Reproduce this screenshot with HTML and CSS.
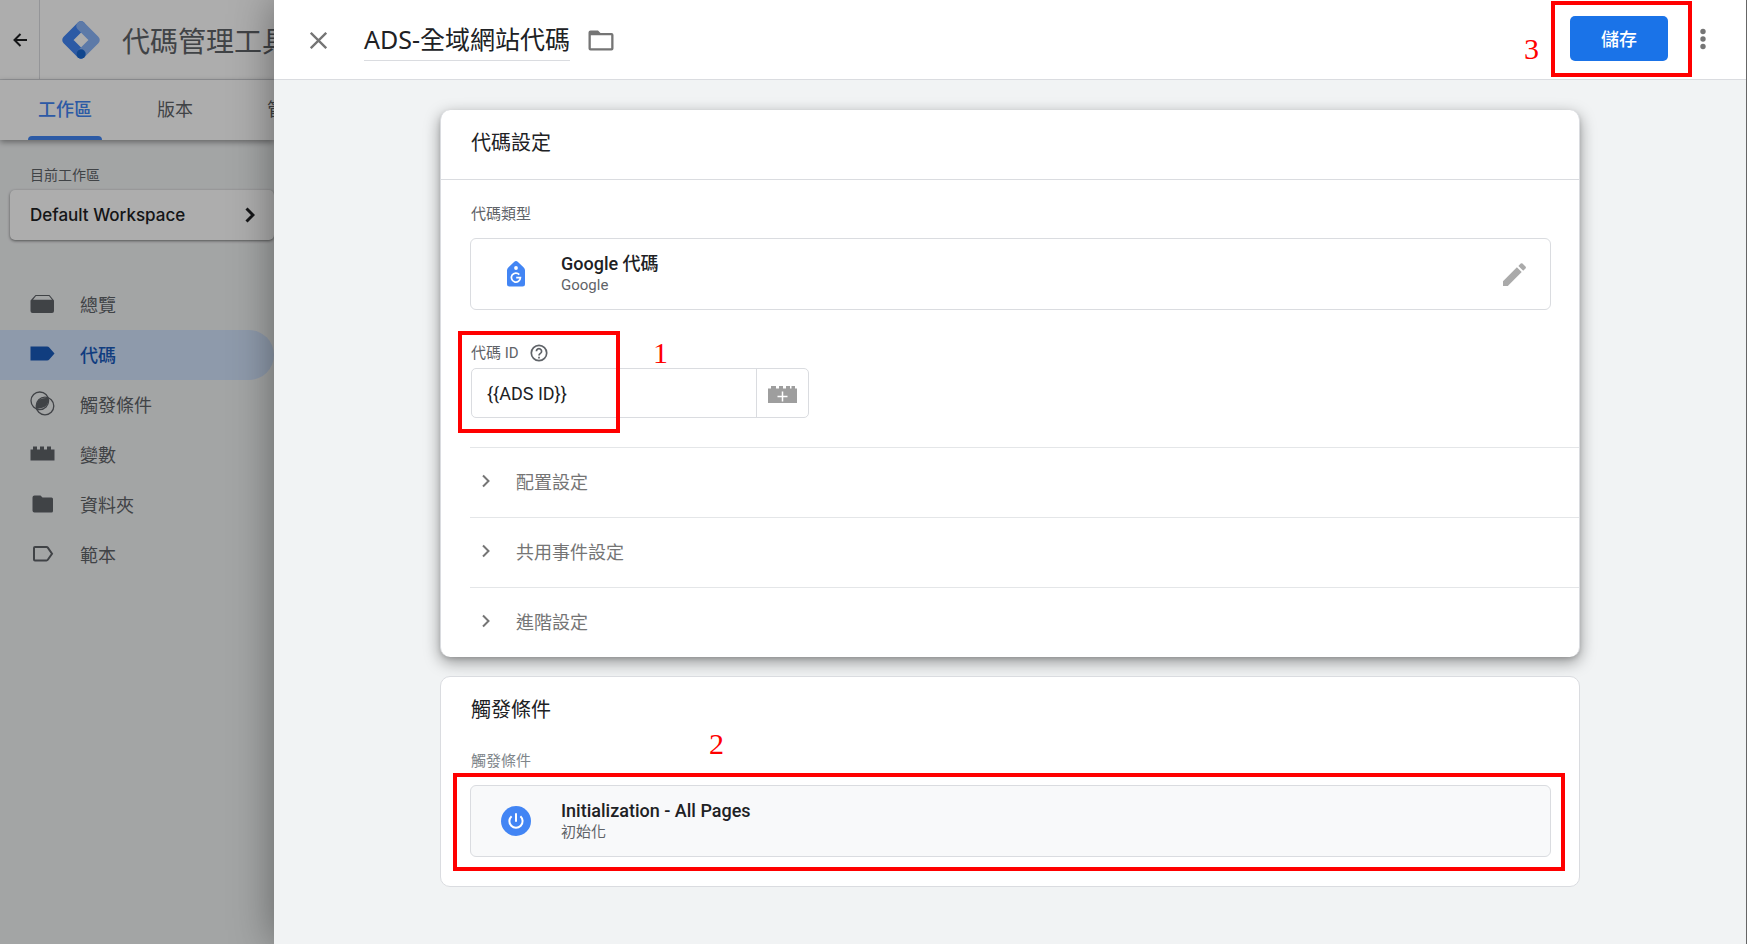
FILE: index.html
```html
<!DOCTYPE html>
<html lang="zh-Hant">
<head>
<meta charset="utf-8">
<title>代碼管理工具</title>
<link rel="stylesheet" href="styles.css">
</head>
<body>
<div class="app">
  <div class="backdrop">
    <header class="topbar">
      <button class="back" type="button" aria-label="返回">
        <svg width="14" height="14" viewBox="0 0 14 14" fill="none" stroke="currentColor" stroke-width="2"><path d="M14 7H2M7.500 1L1.500 7l6 6"/></svg>
      </button>
      <div class="brand">
        <svg width="38" height="38" viewBox="0 0 38 38" fill="none" stroke-width="9.500" stroke-linejoin="round" stroke-linecap="round">
          <path d="M19 5L5 19l14 14" stroke="#4285f4"/>
          <path d="M19 5l14 14-14 14" stroke="#8ab4f8"/>
          <circle cx="19" cy="33" r="4.700" fill="#1967d2"/>
        </svg>
        <span class="brand-name">代碼管理工具</span>
      </div>
    </header>
    <nav class="tabs">
      <a class="tab tab-active" href="#">工作區</a>
      <a class="tab" href="#">版本</a>
      <a class="tab" href="#">管理</a>
    </nav>
    <div class="sidebar">
      <div class="ws-label">目前工作區</div>
      <button class="workspace" type="button">
        <span>Default Workspace</span>
        <svg width="10" height="16" viewBox="0 0 10 16" fill="none" stroke="currentColor" stroke-width="3"><path d="M1.500 1.500L8 8l-6.500 6.500"/></svg>
      </button>
      <nav class="menu">
        <a class="item" href="#"><svg width="25" height="25" viewBox="0 0 25 25"><path d="M5.500 4h14L24 9.500V20a2 2 0 0 1-2 2H2.500a2 2 0 0 1-2-2V9.500zM6 5L3 8.800h19L19 5z" fill="currentColor" fill-rule="evenodd"/></svg>總覽</a>
        <a class="item item-active" href="#"><svg width="25" height="25" viewBox="0 0 25 25"><path d="M.5 5.500h16.500q1.500 0 2.500 1.200L24.500 12.500l-5 5.800q-1 1.200-2.500 1.200H.5z" fill="currentColor"/></svg>代碼</a>
        <a class="item" href="#"><svg width="25" height="25" viewBox="0 0 25 25"><g fill="none" stroke="currentColor" stroke-width="1.300"><circle cx="9.800" cy="9.800" r="8.800"/><circle cx="15" cy="15" r="8.800"/></g><path d="M18.300 7.100C19 12 17 18 6.500 17.700 5.500 11 9 6 18.300 7.100z" fill="currentColor"/></svg>觸發條件</a>
        <a class="item" href="#"><svg width="25" height="25" viewBox="0 0 25 25"><path d="M.5 8.500H3V5.500h4v3h3v-3h4v3h3v-3h4v3h3.500v11H.5z" fill="currentColor"/></svg>變數</a>
        <a class="item" href="#"><svg width="25" height="25" viewBox="0 0 25 25"><path d="M4.500 4.500h6L12.500 6.500h9a1.500 1.500 0 0 1 1.500 1.500v12a1.500 1.500 0 0 1-1.500 1.500h-17A2 2 0 0 1 2.500 19.500v-13a2 2 0 0 1 2-2z" fill="currentColor"/></svg>資料夾</a>
        <a class="item" href="#"><svg width="25" height="25" viewBox="0 0 25 25"><path d="M5 6h11.500q.8 0 1.300.7L22 12.800l-4.200 6q-.5.700-1.300.7H5a1 1 0 0 1-1-1V7a1 1 0 0 1 1-1z" fill="none" stroke="currentColor" stroke-width="2"/></svg>範本</a>
      </nav>
    </div>
  </div>

  <main class="panel">
    <header class="panel-head">
      <button class="icon-btn icon-low close" type="button" aria-label="關閉">
        <svg width="17" height="17" viewBox="0 0 17 17" fill="none" stroke="currentColor" stroke-width="2.300"><path d="M.8.800l15.400 15.400M16.200.800L.8 16.200"/></svg>
      </button>
      <h1 class="tag-name">ADS-全域網站代碼</h1>
      <button class="icon-btn icon-low" type="button" aria-label="資料夾">
        <svg width="26" height="21" viewBox="0 0 26 21"><path d="M2.500.5h7.500L12.500 3H23.500A2 2 0 0 1 25.500 5v13.500a2 2 0 0 1-2 2h-21a2 2 0 0 1-2-2v-16a2 2 0 0 1 2-2zM2.800 5.200v13h20.400v-13z" fill="currentColor" fill-rule="evenodd"/></svg>
      </button>
      <div class="save-wrap">
        <button class="save" type="button">儲存</button>
        <span class="mark mark-save"></span>
        <span class="num num-3">3</span>
      </div>
      <button class="icon-btn" type="button" aria-label="更多">
        <svg width="6" height="22" viewBox="0 0 6 22" fill="currentColor"><circle cx="3" cy="3.500" r="2.700"/><circle cx="3" cy="11" r="2.700"/><circle cx="3" cy="18.500" r="2.700"/></svg>
      </button>
    </header>

    <div class="content">
      <section class="card card-raised">
        <h2 class="card-title card-title-line">代碼設定</h2>
        <div class="card-body">
          <div class="label">代碼類型</div>
          <div class="entity">
            <svg class="entity-icon" width="30" height="30" viewBox="0 0 30 30">
              <path d="M15 2q1 0 1.700.8l5.800 5.400q1.500 1.300 1.500 3V25a2.500 2.500 0 0 1-2.500 2.500h-13A2.500 2.500 0 0 1 6 25V11.200q0-1.700 1.500-3l5.800-5.400Q14 2 15 2z" fill="#4285f4"/>
              <circle cx="15" cy="9" r="1.900" fill="#fff"/>
              <path d="M18.300 15.600A4.500 4.500 0 1 0 19.400 18.700H15.200" fill="none" stroke="#fff" stroke-width="1.700"/>
            </svg>
            <div class="entity-text">
              <div class="entity-name">Google 代碼</div>
              <div class="entity-sub">Google</div>
            </div>
            <button class="edit" type="button" aria-label="編輯">
              <svg width="23" height="23" viewBox="0 0 23 23" fill="currentColor"><path d="M0 18.200V23h4.800L18.700 9.100l-4.800-4.800zM22.500 5.400a1.300 1.300 0 0 0 0-1.800l-3-3a1.300 1.300 0 0 0-1.800 0l-2.300 2.300 4.800 4.800z"/></svg>
            </button>
          </div>
          <div class="field">
            <div class="field-label">
              <label for="tag-id">代碼 ID</label>
              <svg width="18" height="18" viewBox="0 0 18 18" fill="none" stroke="currentColor" stroke-width="1.700"><circle cx="9" cy="9" r="7.700"/><path d="M6.400 7.300a2.600 2.600 0 1 1 4 2.100Q9 10.300 9 11.500"/><path d="M9 12.700v1.800"/></svg>
            </div>
            <div class="combo">
              <input class="combo-input" id="tag-id" type="text" value="{{ADS ID}}">
              <button class="combo-btn" type="button" aria-label="插入變數">
                <svg width="29" height="18" viewBox="0 0 29 18"><path d="M0 3.500h3V1h5v2.500h3V1h4v2.500h3V1h4v2.500h1.500V1H27v2.500h2V18H0z" fill="#9e9e9e"/><path d="M14.500 6.500v10M9.500 11.500h10" stroke="#fff" stroke-width="1.500"/></svg>
              </button>
            </div>
            <span class="mark mark-field"></span>
            <span class="num num-1">1</span>
          </div>
        </div>
        <div class="sections">
          <button class="expander" type="button"><svg width="10" height="14" viewBox="0 0 10 14" fill="none" stroke="currentColor" stroke-width="2"><path d="M2 1.500L7.500 7 2 12.500"/></svg>配置設定</button>
          <button class="expander" type="button"><svg width="10" height="14" viewBox="0 0 10 14" fill="none" stroke="currentColor" stroke-width="2"><path d="M2 1.500L7.500 7 2 12.500"/></svg>共用事件設定</button>
          <button class="expander" type="button"><svg width="10" height="14" viewBox="0 0 10 14" fill="none" stroke="currentColor" stroke-width="2"><path d="M2 1.500L7.500 7 2 12.500"/></svg>進階設定</button>
        </div>
      </section>

      <section class="card">
        <h2 class="card-title">觸發條件</h2>
        <div class="card-body card-body-tight">
          <div class="label label-light">觸發條件</div>
          <div class="trigger">
            <div class="entity entity-tint">
              <svg class="entity-icon" width="30" height="30" viewBox="0 0 30 30"><circle cx="15" cy="15" r="15" fill="#4285f4"/><path d="M15 7.200v8.600M10.600 10.200a6.600 6.600 0 1 0 8.800 0" fill="none" stroke="#fff" stroke-width="2"/></svg>
              <div class="entity-text">
                <div class="entity-name">Initialization - All Pages</div>
                <div class="entity-sub">初始化</div>
              </div>
            </div>
            <span class="mark mark-trigger"></span>
            <span class="num num-2">2</span>
          </div>
        </div>
      </section>
    </div>
  </main>
</div>
</body>
</html>
```
FILE: styles.css
```css
* { box-sizing: border-box; }
body {
  margin: 0;
  font-family: Roboto, "Noto Sans CJK TC", sans-serif;
  color: #202124;
  background: #f1f3f4;
}
button {
  font: inherit;
  color: inherit;
  background: none;
  border: 0;
  padding: 0;
  cursor: pointer;
}
a { color: inherit; text-decoration: none; }
svg { display: block; flex: none; }
h1, h2 { margin: 0; font-weight: 400; }

.app {
  display: grid;
  grid-template-columns: 274px minmax(0, 1fr);
  min-height: 100vh;
}

/* Dimmed page behind the panel */
.backdrop {
  position: relative;
  overflow: hidden;
  background: #f1f3f4;
  color: #5f6368;
}
.backdrop::after {
  content: "";
  position: absolute;
  inset: 0;
  background: rgba(0, 0, 0, .32);
  z-index: 2;
}
.topbar {
  display: flex;
  height: 80px;
  background: #fff;
  border-bottom: 1px solid #dadce0;
}
.back {
  flex: none;
  display: grid;
  place-items: center;
  width: 40px;
  border-right: 1px solid #dadce0;
  color: #202124;
}
.brand {
  display: flex;
  align-items: center;
  gap: 22px;
  padding-left: 22px;
}
.brand-name { font-size: 28px; white-space: nowrap; }
.tabs {
  position: relative;
  display: flex;
  height: 60px;
  padding-left: 28px;
  gap: 36px;
  background: #fff;
  box-shadow: 0 2px 6px rgba(0, 0, 0, .4);
  font-size: 18px;
}
.tab {
  flex: none;
  min-width: 74px;
  padding: 17px 10px 0;
  line-height: 26px;
  text-align: center;
}
.tab-active {
  color: #4285f4;
  position: relative;
  font-weight: 500;
}
.tab-active::after {
  content: "";
  position: absolute;
  left: 0;
  right: 0;
  bottom: 0;
  height: 4px;
  border-radius: 4px 4px 0 0;
  background: #4285f4;
}
.sidebar { padding-top: 23px; }
.ws-label {
  padding-left: 30px;
  font-size: 14px;
  line-height: 24px;
}
.workspace {
  display: flex;
  align-items: center;
  justify-content: space-between;
  width: 264px;
  height: 50px;
  margin: 3px 0 0 10px;
  padding: 0 19px 0 20px;
  border-radius: 5px;
  background: #fff;
  box-shadow: 0 1px 3px rgba(0, 0, 0, .5);
  color: #202124;
  font-family: Inter, sans-serif;
  font-size: 17px;
  font-weight: 500;
}
.menu { margin-top: 40px; }
.item {
  display: flex;
  align-items: center;
  gap: 25px;
  height: 50px;
  padding: 0 0 3px 30px;
  border-radius: 0 25px 25px 0;
  font-size: 18px;
}
.item-active {
  background: #d2e3fc;
  color: #185abc;
  font-weight: 500;
}

/* Sliding panel */
.panel {
  position: relative;
  z-index: 3;
  border-right: 1px solid #666;
  background: #f1f3f4;
  box-shadow: 0 0 40px rgba(0, 0, 0, .4);
}
.panel-head {
  display: flex;
  align-items: center;
  height: 80px;
  padding: 0 40px 2px 36px;
  background: #fff;
  border-bottom: 1px solid #dadce0;
}
.icon-btn { color: #757575; }
.icon-low { padding-top: 3px; }
.close { margin-right: 37px; }
.tag-name {
  margin-right: 18px;
  padding: 4px 0 2px;
  border-bottom: 1px solid #dadce0;
  font-family: "Noto Sans", "Noto Sans CJK TC", sans-serif;
  font-size: 25px;
  line-height: 38px;
}
.save-wrap {
  position: relative;
  margin-left: auto;
  margin-right: 32px;
}
.save {
  display: block;
  width: 98px;
  height: 45px;
  padding-bottom: 2px;
  border-radius: 5px;
  background: #1a73e8;
  color: #fff;
  font-size: 18px;
  font-weight: 500;
}

.content {
  display: flex;
  flex-direction: column;
  gap: 19px;
  max-width: 1140px;
  margin: 0 auto;
  padding: 30px 0;
}
.card {
  border: 1px solid #dadce0;
  border-radius: 10px;
  background: #fff;
}
.card-raised {
  border-width: 0 1px;
  box-shadow: 0 5px 16px rgba(0, 0, 0, .4), 0 2px 4px rgba(0, 0, 0, .12);
}
.card-title {
  padding: 18px 30px 0;
  font-size: 20px;
  line-height: 30px;
}
.card-title-line {
  padding-bottom: 21px;
  border-bottom: 1px solid #dadce0;
}
.card-body { padding: 22px 28px 29px 29px; }
.card-body-tight { padding-top: 24px; }
.label {
  margin-bottom: 12px;
  padding-left: 1px;
  font-size: 15px;
  line-height: 24px;
  color: #5f6368;
}
.label-light { color: #80868b; }
.entity {
  display: flex;
  align-items: center;
  min-height: 72px;
  padding: 0 24px 0 30px;
  border: 1px solid #dadce0;
  border-radius: 6px;
}
.entity-tint { background: #f8f9fa; }
.entity-text { flex: 1; margin-left: 30px; }
.entity-name {
  font-size: 18px;
  line-height: 22px;
  font-weight: 500;
}
.entity-sub {
  font-size: 15px;
  line-height: 20px;
  color: #5f6368;
}
.edit { color: #aaa; }
.field { position: relative; margin-top: 31px; }
.field-label {
  display: flex;
  align-items: center;
  gap: 11px;
  margin-bottom: 3px;
  padding-left: 1px;
  font-size: 15px;
  line-height: 24px;
  color: #5f6368;
}
.combo {
  display: flex;
  width: 338px;
  margin-left: 1px;
  border: 1px solid #dadce0;
  border-radius: 5px;
}
.combo-input {
  flex: 1;
  min-width: 0;
  height: 48px;
  padding: 0 15px;
  border: 0;
  outline: 0;
  background: none;
  color: #202124;
  font: 18px Roboto, sans-serif;
}
.combo-btn {
  display: grid;
  place-items: center;
  width: 52px;
  padding-top: 2px;
  border-left: 1px solid #dadce0;
}
.sections { padding-left: 29px; }
.expander {
  display: flex;
  align-items: center;
  gap: 25px;
  width: 100%;
  height: 70px;
  padding: 0 0 4px 11px;
  border-top: 1px solid #e4e6e8;
  font-size: 18px;
  color: #757575;
}

/* Step annotations laid over the interface */
.mark {
  position: absolute;
  border: 4px solid #f00;
  pointer-events: none;
}
.num {
  position: absolute;
  color: #f00;
  font-family: "Liberation Serif", serif;
  font-size: 30px;
  line-height: 30px;
}
.mark-save { inset: -15px -24px -16px -19px; }
.num-3 { left: -46px; top: 18px; }
.mark-field { left: -12px; top: -10px; width: 162px; height: 102px; }
.num-1 { left: 183px; top: -3px; }
.trigger { position: relative; }
.mark-trigger { inset: -12px -14px -14px -17px; }
.num-2 { left: 239px; top: -56px; }
```
